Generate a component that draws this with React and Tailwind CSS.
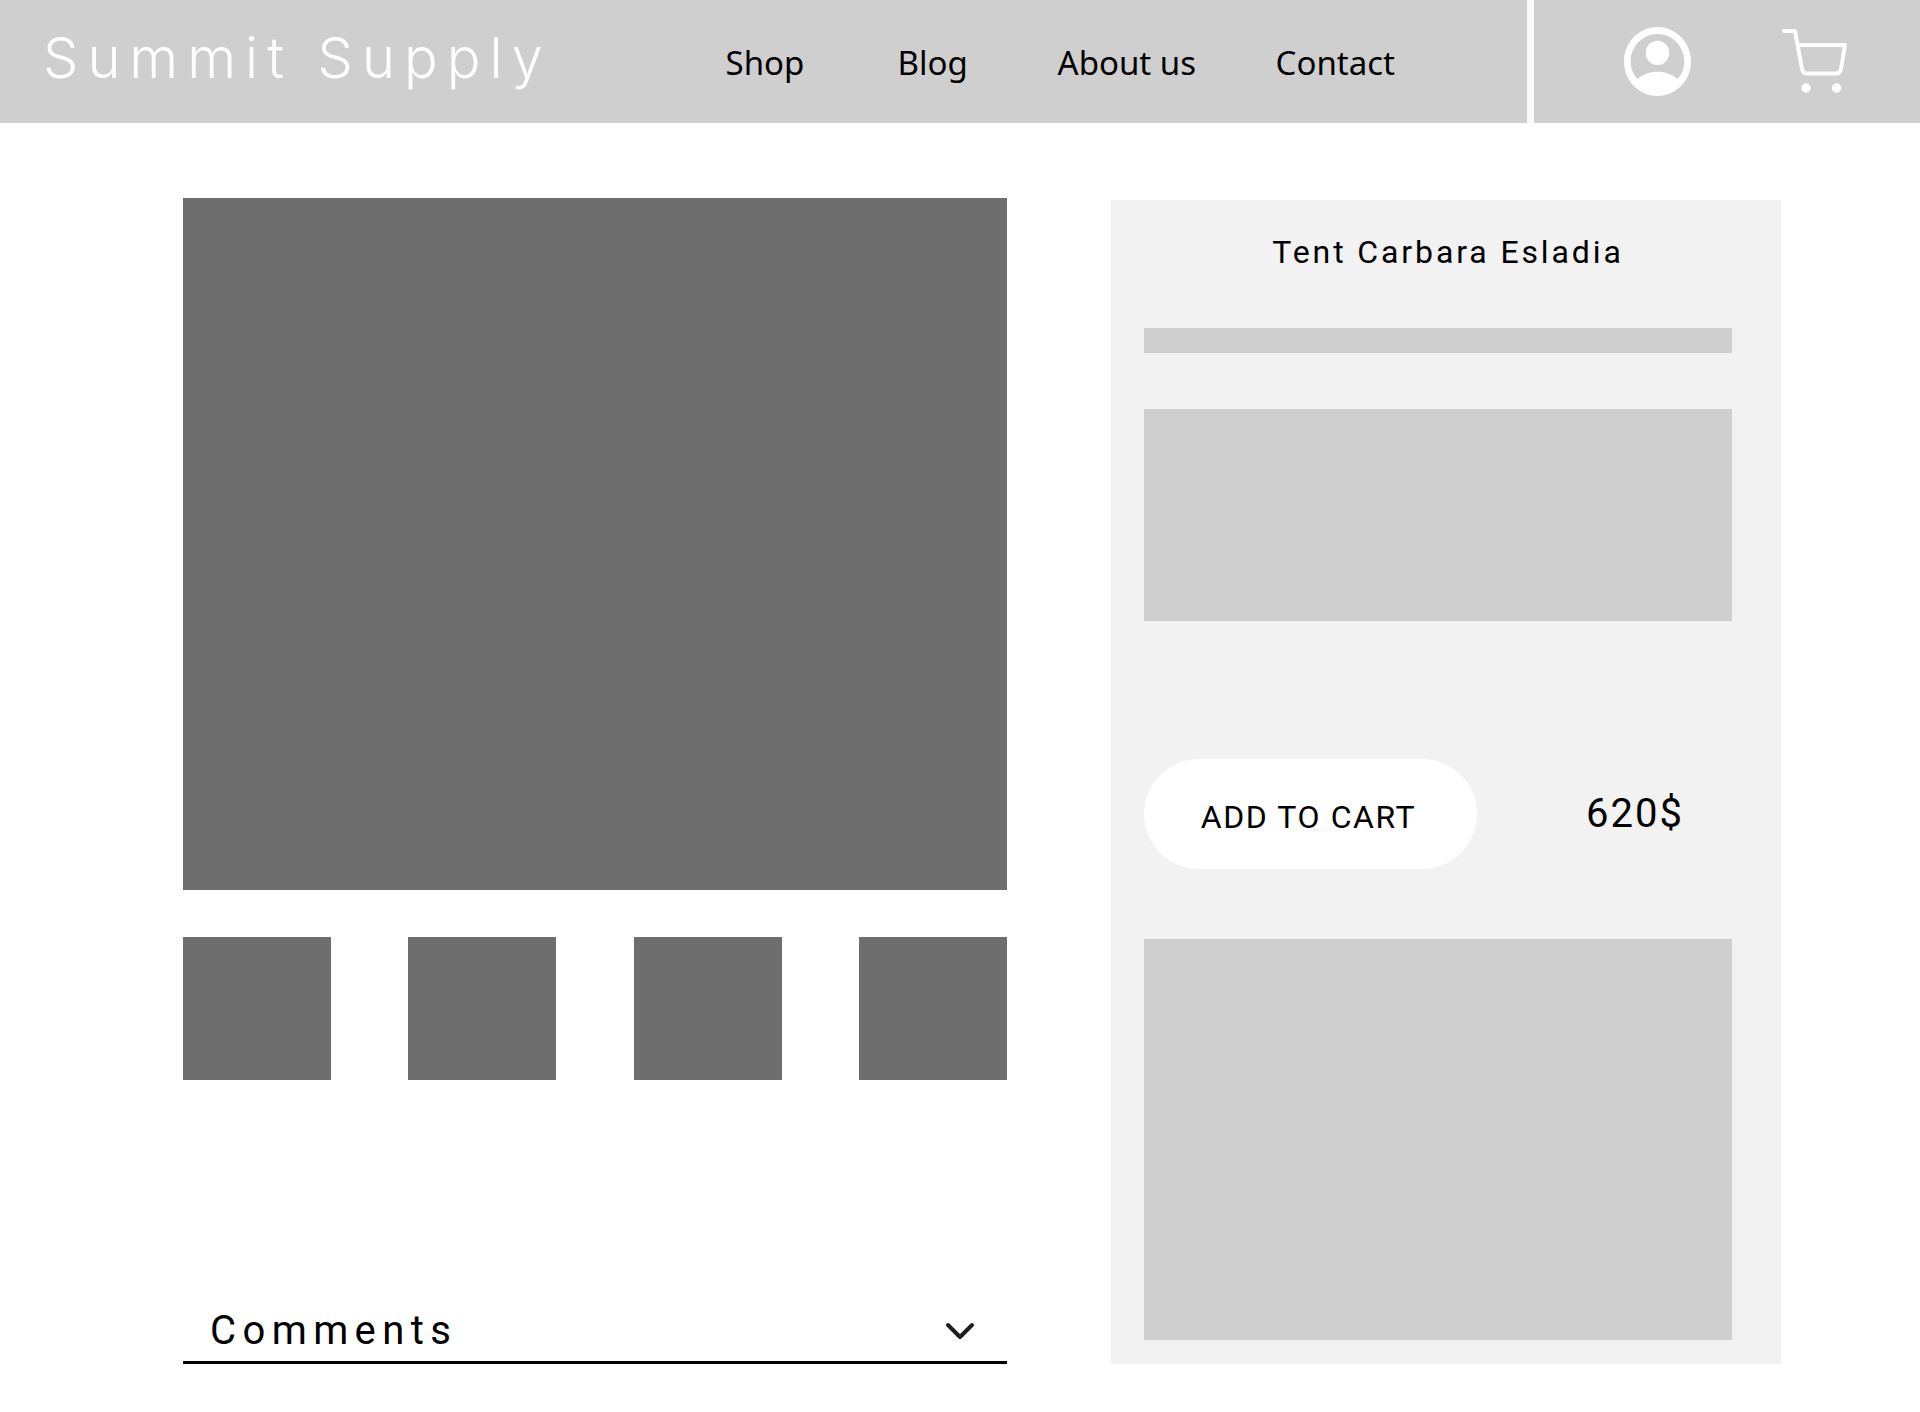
const navLinks = ["Shop", "Blog", "About us", "Contact"];
const thumbnails = [1, 2, 3, 4];

function AccountIcon() {
  return (
    <svg viewBox="2 2 20 20" preserveAspectRatio="none" className="h-[69px] w-[67px]" fill="currentColor" aria-hidden="true">
      <path d="M12 2C6.48 2 2 6.48 2 12s4.48 10 10 10 10-4.48 10-10S17.52 2 12 2zM6 17.1C4.75 15.74 4 13.95 4 12c0-4.42 3.58-8 8-8s8 3.58 8 8c0 1.95-.75 3.74-2 5.1C16.35 15.78 14.28 15 12 15s-4.35.78-6 2.1z" />
      <circle cx="12" cy="9.5" r="3.5" />
    </svg>
  );
}

function CartIcon() {
  return (
    <svg viewBox="0 0 66 66" className="size-[66px]" fill="none" stroke="currentColor" strokeWidth="4" strokeLinecap="round" strokeLinejoin="round" aria-hidden="true">
      <path d="M2 2H13L20 40Q21 44.500 25 44.500H54Q58 44.500 59 40L63 16H16" />
      <circle cx="24" cy="59" r="2.500" strokeWidth="4.500" />
      <circle cx="54.500" cy="59" r="2.500" strokeWidth="4.500" />
    </svg>
  );
}

function Header() {
  return (
    <header className="flex h-[123px] bg-[#cfcfcf]">
      <div className="flex flex-1 items-center justify-between pr-[132px] pl-[43px]">
        <a href="#" className="pb-2 font-['Inter',sans-serif] text-[56px] leading-none font-light tracking-[9px] whitespace-nowrap text-white">
          Summit Supply
        </a>
        <nav className="grid grid-cols-[172px_160px_218px_auto] pt-0.5 font-['Noto_Sans',sans-serif] text-[33px] leading-10 text-black">
          {navLinks.map((label) => (
            <a key={label} href="#" className="justify-self-start">{label}</a>
          ))}
        </nav>
      </div>
      <div className="flex w-[393px] items-center justify-between border-l-[7px] border-[#fafafa] pr-[72px] pl-[90px] text-white">
        <button type="button" aria-label="Account"><AccountIcon /></button>
        <button type="button" aria-label="Cart"><CartIcon /></button>
      </div>
    </header>
  );
}

function Gallery() {
  return (
    <section className="flex flex-col" aria-label="Product photos">
      <div className="h-[692px] bg-[#6e6e6e]" />
      <div className="mt-[47px] flex justify-between">
        {thumbnails.map((n) => (
          <button key={n} type="button" aria-label={`Photo ${n}`} className="h-[143px] w-[148px] bg-[#6e6e6e]" />
        ))}
      </div>
      <button type="button" className="mt-auto flex items-center justify-between border-b-[3px] border-black pr-[23px] pb-1.5 pl-[27px] text-black">
        <span className="text-[40px] leading-12 tracking-[0.16em]">Comments</span>
        <svg viewBox="0 0 24 24" className="size-12" fill="none" stroke="#1e1e1e" strokeWidth="2" strokeLinecap="round" strokeLinejoin="round" aria-hidden="true">
          <path d="m6 9 6 6 6-6" />
        </svg>
      </button>
    </section>
  );
}

function ProductPanel() {
  return (
    <section className="mt-0.5 bg-[#f2f2f2] pt-8 pr-[49px] pb-6 pl-[33px]">
      <h1 className="pl-5 text-center text-[32px] leading-10 tracking-[0.09em]">Tent Carbara Esladia</h1>
      <div className="mt-14 h-[25px] bg-[#cfcfcf]" />
      <div className="mt-14 h-[212px] bg-[#cfcfcf]" />
      <div className="mt-[138px] flex items-center justify-between pr-12">
        <button type="button" className="h-[110px] w-[333px] rounded-full bg-white pt-1.5 pr-1 text-[32px] leading-10 tracking-wider">
          ADD TO CART
        </button>
        <span className="text-[40px] leading-12 tracking-wider">620$</span>
      </div>
      <div className="mt-[70px] h-[401px] bg-[#cfcfcf]" />
    </section>
  );
}

export default function App() {
  return (
    <div className="min-h-screen bg-white font-['Roboto',sans-serif] text-black">
      <Header />
      <main className="grid grid-cols-[824fr_670fr] gap-[104px] pt-[75px] pr-[139px] pb-12 pl-[183px]">
        <Gallery />
        <ProductPanel />
      </main>
    </div>
  );
}
